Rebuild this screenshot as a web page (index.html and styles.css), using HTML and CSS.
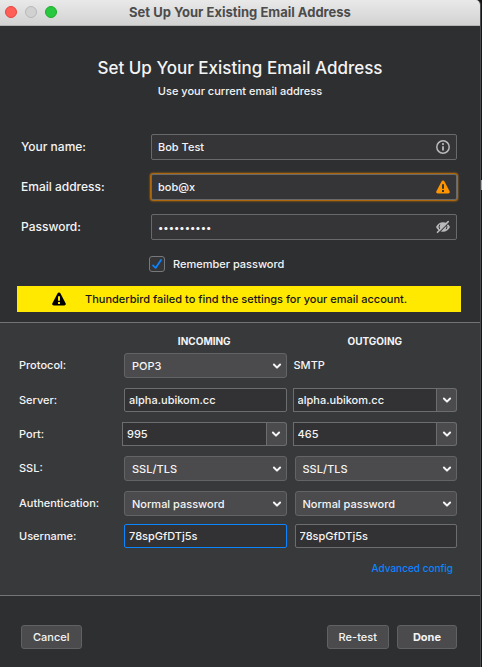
FILE: index.html
```html
<!DOCTYPE html>
<html lang="en">
<head>
<meta charset="utf-8">
<title>Set Up Your Existing Email Address</title>
<link rel="stylesheet" href="styles.css">
</head>
<body>
<svg class="sprite" aria-hidden="true">
  <symbol id="chevron" viewBox="0 0 10 10"><path d="M1.9 3.5 5 6.6 8.1 3.5" fill="none" stroke="currentColor" stroke-width="2" stroke-linecap="round" stroke-linejoin="round"/></symbol>
  <symbol id="warning" viewBox="0 0 14 14"><path fill-rule="evenodd" d="M7 .5c.7 0 1.200.3 1.500.9l5.100 9.800c.6 1.100-.1 2.300-1.400 2.300H1.800C.5 13.500-.2 12.300.4 11.200L5.500 1.400C5.800.8 6.300.5 7 .5ZM6 4.200v4.600h2V4.200Zm0 5.800v2h2v-2Z" fill="currentColor"/></symbol>
</svg>
<div class="window">
  <header class="titlebar">
    <div class="lights">
      <button class="light close" aria-label="Close"></button>
      <button class="light minimize" aria-label="Minimize" disabled></button>
      <button class="light zoom" aria-label="Zoom"></button>
    </div>
    <span class="titlebar-text">Set Up Your Existing Email Address</span>
  </header>
  <main>
    <div class="intro">
      <h1>Set Up Your Existing Email Address</h1>
      <p>Use your current email address</p>
    </div>
    <div class="account">
      <label for="name">Your name:</label>
      <div class="field">
        <input id="name" type="text" value="Bob Test">
        <svg class="field-icon" viewBox="0 0 14 14"><circle cx="7" cy="7" r="6.200" fill="none" stroke="currentColor" stroke-width="1.500"/><path d="M7 6.200v4.300" stroke="currentColor" stroke-width="1.800"/><circle cx="7" cy="4.100" r="1.100" fill="currentColor"/></svg>
      </div>
      <label for="email">Email address:</label>
      <div class="field invalid">
        <input id="email" type="text" value="bob@x">
        <svg class="field-icon alert"><use href="#warning"/></svg>
      </div>
      <label for="password">Password:</label>
      <div class="field">
        <input id="password" type="password" value="testpasswd">
        <svg class="field-icon" viewBox="0 0 14 14"><path d="M0 7C1.500 3.800 4 2.200 7 2.200c3 0 5.500 1.600 7 4.800-1.500 3.200-4 4.800-7 4.800S1.500 10.200 0 7Z" fill="currentColor"/><path d="M3.800 4.600a4 4 0 0 0 0 4.600M10.200 4.600a4 4 0 0 1 0 4.600" fill="none" stroke="#353538" stroke-width="1"/><path d="M2.200 13.300 13.400 2.100" stroke="#353538" stroke-width="1.200"/><path d="M1.500 12.300 12.200 1.600" stroke="currentColor" stroke-width="1.600" stroke-linecap="round"/></svg>
      </div>
      <div class="remember">
        <span class="check">
          <input id="remember" type="checkbox" checked>
          <svg viewBox="0 0 14 14"><path d="M3 8.300 5.600 11 11 3" fill="none" stroke="currentColor" stroke-width="1.700" stroke-linecap="round" stroke-linejoin="round"/></svg>
        </span>
        <label for="remember">Remember password</label>
      </div>
    </div>
    <div class="notice" role="alert">
      <svg><use href="#warning"/></svg>
      <span>Thunderbird failed to find the settings for your email account.</span>
    </div>
    <section class="settings">
      <div class="heads">
        <h2>INCOMING</h2>
        <h2>OUTGOING</h2>
      </div>
      <div class="servers">
        <label for="in-protocol">Protocol:</label>
        <div class="pick inset"><select id="in-protocol"><option>POP3</option></select><svg><use href="#chevron"/></svg></div>
        <span class="plain">SMTP</span>

        <label for="in-server">Server:</label>
        <input id="in-server" class="box inset" type="text" value="alpha.ubikom.cc">
        <div class="combo"><input class="box" type="text" value="alpha.ubikom.cc" aria-label="Outgoing server"><button aria-label="Show servers"><svg><use href="#chevron"/></svg></button></div>

        <label for="in-port">Port:</label>
        <div class="combo"><input id="in-port" class="box" type="text" value="995"><button aria-label="Show incoming ports"><svg><use href="#chevron"/></svg></button></div>
        <div class="combo"><input class="box" type="text" value="465" aria-label="Outgoing port"><button aria-label="Show outgoing ports"><svg><use href="#chevron"/></svg></button></div>

        <label for="in-ssl">SSL:</label>
        <div class="pick inset"><select id="in-ssl"><option>SSL/TLS</option></select><svg><use href="#chevron"/></svg></div>
        <div class="pick inset"><select aria-label="Outgoing SSL"><option>SSL/TLS</option></select><svg><use href="#chevron"/></svg></div>

        <label for="in-auth">Authentication:</label>
        <div class="pick inset"><select id="in-auth"><option>Normal password</option></select><svg><use href="#chevron"/></svg></div>
        <div class="pick inset"><select aria-label="Outgoing authentication"><option>Normal password</option></select><svg><use href="#chevron"/></svg></div>

        <label for="in-user">Username:</label>
        <input id="in-user" class="box inset active" type="text" value="78spGfDTj5s">
        <input class="box inset" type="text" value="78spGfDTj5s" aria-label="Outgoing username">
      </div>
      <a class="advanced" href="#">Advanced config</a>
    </section>
  </main>
  <footer>
    <button class="btn cancel">Cancel</button>
    <button class="btn">Re-test</button>
    <button class="btn done">Done</button>
  </footer>
</div>
</body>
</html>
```
FILE: styles.css
```css
* { box-sizing: border-box; }

body {
  margin: 0;
  padding-right: 1px;
  background: #161617 linear-gradient(#a8a8aa, #a8a8aa) right 180px / 1px 10px no-repeat;
  color: #f4f4f5;
  font: 500 11px/14px Inter, "Liberation Sans", sans-serif;
}

input, select, button {
  margin: 0;
  font: inherit;
  color: inherit;
  outline: 0;
}

.sprite { position: absolute; width: 0; height: 0; }

.window {
  display: flex;
  flex-direction: column;
  min-height: 100vh;
  background: #2e2f31;
  border-right: 1px solid #4a4b4d;
  border-radius: 0 5px 0 0;
  overflow: hidden;
}

.titlebar {
  display: grid;
  grid-template-columns: 1fr auto 1fr;
  align-items: center;
  height: 26px;
  padding: 0 5px 2px;
  background: linear-gradient(#e9e9e9, #d2d2d2);
  border-bottom: 1px solid #b4b4b4;
}

.titlebar-text { color: #4c4c4c; font-size: 13px; font-weight: 700; }
.lights { display: flex; gap: 8px; }

.light {
  width: 12px;
  height: 12px;
  padding: 0;
  border: 1px solid #e2453f;
  border-radius: 50%;
  background: #ff5f57;
}
.light.minimize { background: #d1d1d1; border-color: #b8b8b8; }
.light.zoom { background: #28c840; border-color: #1dad2b; }

.intro { padding-top: 30px; text-align: center; }
h1 { margin: 0; font-size: 17px; line-height: 24px; font-weight: 500; }
.intro p { margin: 4px 0 0; }

.account {
  display: grid;
  grid-template-columns: 130px 1fr;
  row-gap: 14px;
  align-items: center;
  padding: 36px 23px 0 21px;
}
.account > label { font-size: 12px; line-height: 26px; }
.field { position: relative; }
.field input {
  display: block;
  width: 100%;
  height: 26px;
  padding: 0 30px 0 6px;
  background: #353538;
  border: 1px solid #68696b;
  border-radius: 2px;
}
.field input[type="password"] { font-size: 10px; }
.field.invalid input { box-shadow: 0 0 2px 1px #d97c00; }
.field-icon {
  position: absolute;
  top: 6px;
  right: 7px;
  width: 14px;
  height: 14px;
  color: #b9b9bb;
}
.field-icon.alert { color: #ff9400; }

.remember {
  grid-column: 2;
  display: flex;
  align-items: center;
  gap: 8px;
  margin: 2px 0 0 -2px;
}
.check { position: relative; width: 16px; height: 16px; }
.check input {
  display: block;
  appearance: none;
  width: 16px;
  height: 16px;
  border: 1px solid #77787a;
  border-radius: 3px;
  background: #353538;
}
.check svg {
  position: absolute;
  inset: 1px;
  width: 14px;
  height: 14px;
  color: #0a84ff;
  pointer-events: none;
}

.notice {
  display: flex;
  align-items: center;
  gap: 19px;
  height: 26px;
  margin: 14px 19px 10px 17px;
  padding: 0 35px;
  background: #ffe900;
  color: #15141a;
}
.notice svg { flex: none; width: 14px; height: 14px; color: #000; }

.settings {
  display: flex;
  flex-direction: column;
  padding: 11px 23px 20px 19px;
  background: #38393b;
  border: solid #737476;
  border-width: 1px 0;
}
.heads, .servers {
  display: grid;
  grid-template-columns: 103px 165fr 164fr;
}
.heads { grid-template-columns: 97px 1fr 1fr; column-gap: 6px; padding-bottom: 5px; }
.servers {
  grid-template-columns: 97px 1fr 1fr;
  grid-template-rows: 35px 34px 34px 35px 33px 24px;
  column-gap: 6px;
  align-items: start;
}
h2 { margin: 0; font-size: 10px; line-height: 14px; font-weight: 700; text-align: center; }
h2:first-child { grid-column: 2; }
.servers label { line-height: 25px; }
.plain { padding-left: 1px; line-height: 24px; }
.inset { margin-left: 2px; }

.box {
  width: 100%;
  min-width: 0;
  height: 24px;
  padding: 0 4px;
  background: #323234;
  border: 1px solid #6c6d6f;
  border-radius: 2px;
}
.box.inset { width: auto; }
.box.active { border-color: #0a84ff; }

.pick { position: relative; }
.pick select {
  display: block;
  appearance: none;
  width: 100%;
  height: 25px;
  padding: 0 24px 0 7px;
  background: #4b4b4d;
  border: 1px solid #636466;
  border-radius: 3px;
}
.pick svg, .combo svg { width: 10px; height: 10px; }
.pick svg { position: absolute; top: 8px; right: 5px; pointer-events: none; }

.combo { display: flex; }
.combo .box { flex: 1; border-radius: 0; }
.combo button {
  display: flex;
  align-items: center;
  justify-content: center;
  width: 20px;
  height: 24px;
  padding: 0;
  background: #4b4b4d;
  border: 1px solid #6c6d6f;
  border-left: 0;
  border-radius: 0 3px 3px 0;
}

.advanced {
  align-self: flex-end;
  margin: 13px 4px 0 0;
  color: #0a84ff;
  font-size: 10px;
  text-decoration: none;
}

footer { display: flex; gap: 8px; padding: 29px 23px 18px 21px; }
.btn {
  height: 24px;
  padding: 0 11px;
  background: #4b4b4d;
  border: 1px solid #606163;
  border-radius: 3px;
}
.cancel { margin-right: auto; }
.done { padding: 0 15px; font-weight: 700; }
```
